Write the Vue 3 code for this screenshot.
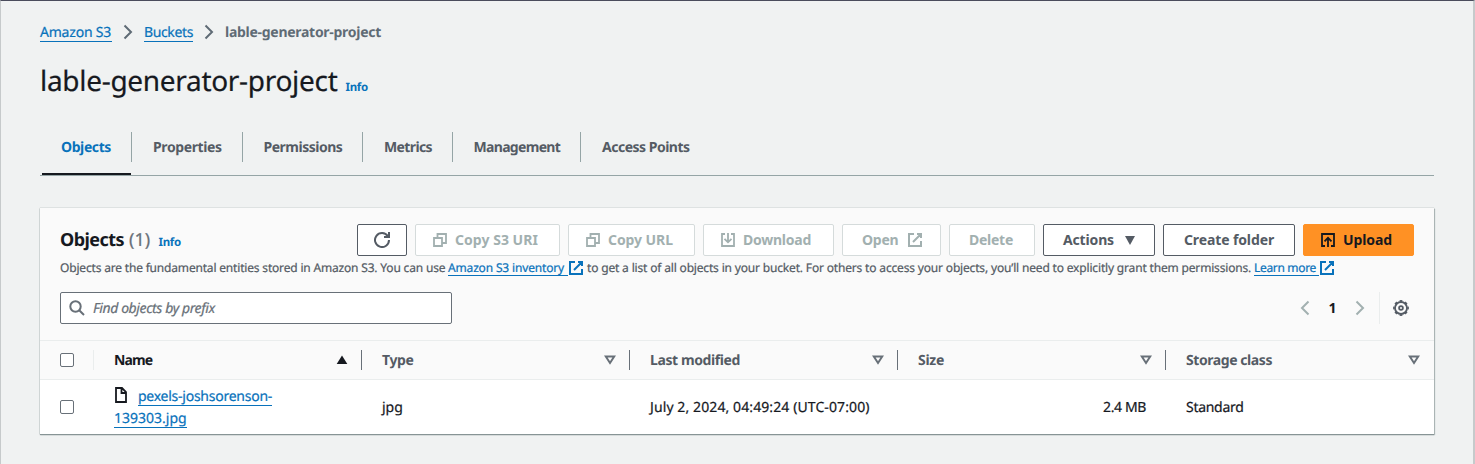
<script setup>
const tabs = ['Objects', 'Properties', 'Permissions', 'Metrics', 'Management', 'Access Points']
const columns = [
  { key: 'name', label: 'Name' },
  { key: 'type', label: 'Type' },
  { key: 'modified', label: 'Last modified' },
  { key: 'size', label: 'Size' },
  { key: 'storage', label: 'Storage class' },
]
const buttons = [
  { key: 'refresh', icon: 'refresh' },
  { key: 'copy-uri', label: 'Copy S3 URI', icon: 'copy', disabled: true },
  { key: 'copy-url', label: 'Copy URL', icon: 'copy', disabled: true },
  { key: 'download', label: 'Download', icon: 'download', disabled: true },
  { key: 'open', label: 'Open', after: 'external', disabled: true },
  { key: 'delete', label: 'Delete', disabled: true },
  { key: 'actions', label: 'Actions', after: 'caret' },
  { key: 'create', label: 'Create folder' },
  { key: 'upload', label: 'Upload', icon: 'upload' },
]
const icons = {
  refresh: 'M10 5h5V0M15 8a7 7 0 1 1-1.2-3.9',
  copy: 'M2 6h8v8H2zM5.500 5.500V2H14v9h-3.500',
  download: 'M5 2H2v12h12V2h-3M8 1v9M4.500 6.800 8 10.300l3.500-3.500',
  upload: 'M5 14H2V2h12v12h-3M8 15V6.500M4.500 9.300 8 5.800l3.500 3.500',
  external: 'M10 2h4v4M6 10l8-8M14 9v5H2V2h5',
}
</script>

<template>
  <main class="page">
    <nav class="crumbs">
      <a class="c1">Amazon S3</a>
      <svg viewBox="0 0 10 16"><path d="M1.500 1.500 8 8l-6.500 6.500" /></svg>
      <a class="c2">Buckets</a>
      <svg viewBox="0 0 10 16"><path d="M1.500 1.500 8 8l-6.500 6.500" /></svg>
      <b>lable-generator-project</b>
    </nav>
    <header class="title"><h1>lable-generator-project</h1><a class="info">Info</a></header>
    <div class="tabs">
      <div v-for="(t, i) in tabs" :key="t" class="tab" :class="['t' + i, { active: i === 0 }]"><span>{{ t }}</span></div>
    </div>

    <section class="card">
      <div class="head">
        <div class="toolbar">
          <h2>Objects</h2><span class="count">(1)</span><a class="info">Info</a>
          <div class="actions">
            <button v-for="b in buttons" :key="b.key" :class="[b.key, { disabled: b.disabled }]">
              <svg v-if="b.icon" class="icon" :class="'i-' + b.icon" viewBox="0 0 16 16"><path :d="icons[b.icon]" /></svg>
              <span v-if="b.label">{{ b.label }}</span>
              <svg v-if="b.after === 'external'" class="icon" viewBox="0 0 16 16"><path :d="icons.external" /></svg>
              <svg v-if="b.after === 'caret'" class="caret" viewBox="0 0 10 9"><path d="M0 0h10L5 9z" /></svg>
            </button>
          </div>
        </div>
        <p class="desc">
          <span class="d1">Objects are the fundamental entities stored in Amazon S3. You can use</span>
          <a class="d2">Amazon S3 inventory</a>
          <svg class="icon" viewBox="0 0 16 16"><path :d="icons.external" /></svg>
          <span class="d3">to get a list of all objects in your bucket. For others to access your objects, you’ll need to explicitly grant them permissions.</span>
          <a class="d4">Learn more</a>
          <svg class="icon" viewBox="0 0 16 16"><path :d="icons.external" /></svg>
        </p>
        <div class="filter">
          <div class="search">
            <svg viewBox="0 0 16 16"><circle cx="6.500" cy="6.500" r="5.200" /><path d="m10.200 10.200 4.800 4.800" /></svg>
            <span>Find objects by prefix</span>
          </div>
          <div class="pager">
            <svg class="arrow" viewBox="0 0 10 16"><path d="M8.500 1.500 2 8l6.500 6.500" /></svg>
            <b>1</b>
            <svg class="arrow" viewBox="0 0 10 16"><path d="M1.500 1.500 8 8l-6.500 6.500" /></svg>
            <i></i>
            <svg class="gear" viewBox="0 0 16 16">
              <circle cx="8" cy="8" r="6" stroke-width="1.800" />
              <circle cx="8" cy="8" r="7.100" stroke-width="1.600" pathLength="80" stroke-dasharray="5 5" stroke-dashoffset="2.500" />
              <circle cx="8" cy="8" r="1.900" stroke-width="1.800" />
            </svg>
          </div>
        </div>
      </div>
      <div class="row thead">
        <div class="check"><span class="box"></span></div>
        <div v-for="(c, i) in columns" :key="c.key" class="th" :class="c.key">
          <span>{{ c.label }}</span>
          <svg v-if="i === 0" class="sorted" viewBox="0 0 12 10"><path d="M6 .5l5.300 8.500H.700z" /></svg>
          <svg v-else class="sort" viewBox="0 0 12 10"><path d="M1.800 1.500h8.400L6 8z" /></svg>
        </div>
      </div>
      <div class="row body">
        <div class="check"><span class="box"></span></div>
        <div class="file">
          <svg viewBox="0 0 14 16"><path d="M2 1h6l4 4v10H2zM7.500 1v5H12" /></svg>
          <a class="f1">pexels-joshsorenson-</a><br /><a class="f2">139303.jpg</a>
        </div>
        <div class="cell">jpg</div>
        <div class="cell date">July 2, 2024, 04:49:24 (UTC-07:00)</div>
        <div class="cell bytes">2.4 MB</div>
        <div class="cell standard">Standard</div>
      </div>
    </section>
  </main>
</template>

<style>
body { background: #f0f2f2; }
</style>
<style scoped>
* { box-sizing: border-box; }
.page {
  height: 464px; padding: 20px 39px 0; overflow: hidden;
  border: solid #c6cacb; border-width: 1px 2px 0 1px; border-top-color: #4a4c5c;
  background: #f0f2f2; color: #16191f; font: 14px/22px "Noto Sans", sans-serif;
  text-rendering: geometricPrecision;
}
svg { display: block; flex: none; fill: none; stroke: currentColor; stroke-width: 2; }
a { color: #0972bb; }
h1, .crumbs a, .desc, .count, .search, .body { -webkit-text-stroke: .22px; }
.crumbs { display: flex; align-items: center; height: 22px; color: #5f6b75; }
.crumbs a { border-bottom: 1px solid; line-height: 21px; height: 20px; }
.crumbs svg { width: 10px; height: 16px; margin: 0 11px 0 11px; }
.crumbs b { letter-spacing: -.28px; line-height: 22px; padding-top: 2px; }
.c1 { letter-spacing: -.21px; width: 72px; }
.c2 { letter-spacing: -.37px; width: 49px; }
.title { display: flex; align-items: baseline; height: 36px; margin-top: 20px; }
h1 { margin: 0; font-weight: 400; font-size: 28px; line-height: 36px; letter-spacing: -.3px; width: 305.500px; }
.info { font-size: 11.500px; font-weight: 700; letter-spacing: -.3px; }
.tabs { display: grid; grid-template-columns: 92px 111px 120px 90px 128px 140px; margin-top: 33px; height: 44px; padding-bottom: 1px; border-bottom: 1px solid #95a5a6; }
.tab { position: relative; height: 30px; line-height: 32px; padding-left: 21px; font-weight: 700; color: #545b64; border-right: 1px solid #95a5a6; white-space: nowrap; }
.tab:last-child { border: 0; }
.tab.active { color: #0972bb; }
.active::after { content: ""; position: absolute; left: 2px; right: 0; bottom: -13px; height: 2px; background: #16191f; }
.t0 { letter-spacing: -.4px; }
.t1 { letter-spacing: -.38px; }
.t2 { letter-spacing: -.5px; padding-left: 20.500px; }
.t3 { letter-spacing: -.62px; }
.t4 { letter-spacing: -.68px; padding-left: 20.500px; }
.t5 { letter-spacing: -.5px; }
.card { width: 1394px; height: 226px; margin-top: 32px; background: #fff; box-shadow: 0 0 1px #879596, 0 1px 1px #879596, 1px 1px 1px #bac3c3; }
.head { height: 132px; padding: 16px 20px 0; background: #fafafa; }
.toolbar { display: flex; align-items: baseline; height: 32px; line-height: 32px; }
h2 { margin: 0; width: 69px; font-size: 18px; letter-spacing: -.55px; line-height: 32px; }
.count { width: 29.500px; font-size: 18px; color: #687078; }
.actions { display: flex; align-self: stretch; gap: 8px; margin-left: auto; }
button { display: flex; align-items: center; gap: 7px; height: 32px; padding: 0 0 0 16px; border: 1px solid #545b64; border-radius: 2px; background: #fff; color: #545b64; font: 700 14px/30px "Noto Sans", sans-serif; white-space: nowrap; }
button.disabled { border-color: #d5dbdb; color: #a2b0b0; }
.icon { width: 16px; height: 16px; }
.i-copy, .i-download, .i-upload { stroke-width: 1.800; }
.refresh { width: 50px; }
.copy-uri { width: 145px; letter-spacing: .04px; }
.copy-url { width: 127px; letter-spacing: -.07px; }
.download { width: 131px; letter-spacing: -.24px; }
.open { width: 99px; padding-left: 19px; gap: 8px; letter-spacing: -.22px; }
.delete { width: 86px; padding-left: 19px; letter-spacing: -.26px; }
.actions .actions { width: 112px; margin: 0; padding-left: 19px; gap: 11px; letter-spacing: -.15px; align-self: auto; }
.create { width: 132px; padding-left: 20px; letter-spacing: -.12px; }
.upload { width: 111px; letter-spacing: -.1px; color: #16191f; background: #ff9124; border-color: #ff9124; }
.caret { width: 10px; height: 9px; fill: currentColor; stroke: none; }
.desc { display: flex; align-items: center; margin: 4px 0 0; height: 16px; font-size: 12px; line-height: 16px; color: #545b64; white-space: nowrap; }
.desc .icon { color: #0972bb; }
.desc a { border-bottom: 1px solid; height: 16px; line-height: 16px; }
.d1 { width: 388px; letter-spacing: -.18px; }
.d2 { width: 120px; letter-spacing: -.16px; }
.d3 { width: 667px; margin-left: 3px; letter-spacing: -.17px; }
.d4 { width: 65px; letter-spacing: -.32px; }
.filter { display: flex; justify-content: space-between; margin-top: 16px; }
.search { display: flex; align-items: center; width: 392px; height: 32px; padding-left: 8px; gap: 8px; border: 1px solid #687078; border-radius: 2px; background: #fff; color: #687078; font-style: italic; letter-spacing: -.4px; }
.search span { padding-top: 2px; }
.search svg { width: 16px; height: 16px; }
.pager { display: flex; align-items: center; height: 32px; padding-right: 5px; }
.arrow { width: 10px; height: 16px; color: #a2b0b0; }
.pager b { width: 45px; text-align: center; padding-top: 1px; }
.pager i { width: 1px; height: 32px; margin: 0 13px 0 14px; background: #eaeded; }
.gear { width: 16px; height: 16px; color: #545b64; }
.row { display: grid; grid-template-columns: 54px 268px 268px 268px 268px 268px; align-items: center; }
.row > div { padding-left: 20px; }
.thead { height: 40px; background: #fafafa; border: solid #eaeded; border-width: 1px 0; font-weight: 700; color: #545b64; }
.check { display: flex; align-items: center; height: 20px; }
.thead .check { border-right: 1px solid #eaeded; }
.box { width: 14px; height: 14px; border: 1px solid #687078; border-radius: 2px; background: #fff; }
.th { display: flex; align-items: center; justify-content: space-between; height: 20px; padding-right: 13px; border-right: 1px solid #687078; }
.th:last-child { border-right-color: transparent; }
.th span { padding-top: 2px; }
.th svg { width: 12px; height: 10px; }
.name { color: #16191f; letter-spacing: -.9px; }
.type { letter-spacing: -.37px; }
.modified { letter-spacing: -.4px; }
.size { letter-spacing: -.29px; }
.storage { letter-spacing: -.43px; }
.sorted { fill: currentColor; stroke: none; }
.sort { stroke: #687078; }
.body { height: 54px; }
.body .cell { padding-top: 2px; }
.file svg { display: inline-block; width: 14px; height: 16px; margin-right: 10px; vertical-align: -3px; stroke-width: 1.800; }
.file a { display: inline-block; height: 19px; line-height: 19px; border-bottom: 1px solid; vertical-align: -1px; }
.f1 { letter-spacing: -.25px; }
.date { letter-spacing: .1px; }
.body .bytes { text-align: right; padding-right: 20px; letter-spacing: -.37px; }
.standard { letter-spacing: -.29px; }
</style>
